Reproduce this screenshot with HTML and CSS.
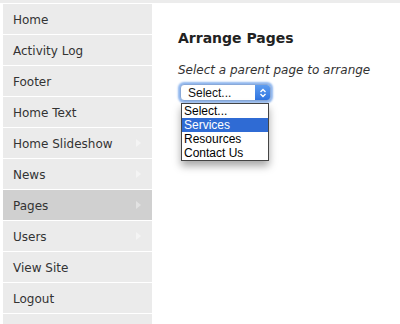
FILE: index.html
```html
<!DOCTYPE html>
<html lang="en">
<head>
    <meta charset="UTF-8">
    <title>Arrange Pages</title>
    <link rel="stylesheet" href="styles.css">
</head>
<body>
    <div class="layout">
        <ul class="side-nav">
            <li><a href="#">Home</a></li>
            <li><a href="#">Activity Log</a></li>
            <li><a href="#">Footer</a></li>
            <li><a href="#">Home Text</a></li>
            <li class="has-sub"><a href="#">Home Slideshow</a></li>
            <li class="has-sub"><a href="#">News</a></li>
            <li class="has-sub active"><a href="#">Pages</a></li>
            <li class="has-sub"><a href="#">Users</a></li>
            <li><a href="#">View Site</a></li>
            <li><a href="#">Logout</a></li>
            <li><a href="#">&nbsp;</a></li>
        </ul>

        <div class="main-content">
            <h2>Arrange Pages</h2>
            <p class="hint">Select a parent page to arrange</p>

            <div class="picker">
                <div class="select-box">
                    <span>Select...</span>
                    <span class="select-btn">
                        <svg width="8" height="10" viewBox="0 0 8 10">
                            <path d="M1.5 4 L4 1.5 L6.5 4 M1.5 6 L4 8.5 L6.5 6" fill="none" stroke="#fff" stroke-width="1.4"/>
                        </svg>
                    </span>
                </div>
                <ul class="select-list">
                    <li>Select...</li>
                    <li class="selected">Services</li>
                    <li>Resources</li>
                    <li>Contact Us</li>
                </ul>
            </div>
        </div>
    </div>
</body>
</html>
```

FILE: styles.css
```css
* {
    margin: 0;
    padding: 0;
    box-sizing: border-box;
}

html {
    height: 100%;
    overflow: hidden;
}

body {
    font-family: "DejaVu Sans", Verdana, sans-serif;
    background: white;
    border-top: 3px solid #ececec;
    color: #333;
}

.layout {
    display: flex;
    gap: 26px;
    padding: 1px 0 0 3px;
}

.side-nav {
    list-style: none;
    width: 149px;
    flex-shrink: 0;
}

.side-nav li {
    position: relative;
    background: #ebebeb;
    margin-bottom: 1px;
}

.side-nav a {
    display: block;
    height: 30px;
    padding: 2px 0 0 10px;
    line-height: 29px;
    font-size: 12px;
    color: #333;
    text-decoration: none;
}

.side-nav li.active {
    background: #d0d0d0;
}

.side-nav li.has-sub::after {
    content: "";
    position: absolute;
    right: 11px;
    top: 11px;
    border-left: 5px solid #f4f4f4;
    border-top: 4px solid transparent;
    border-bottom: 4px solid transparent;
}

.side-nav li.active::after {
    border-left-color: #e2e2e2;
}

.main-content {
    padding-top: 26px;
}

.main-content h2 {
    font-size: 14px;
    line-height: 16px;
    font-weight: bold;
    color: #222;
    margin-bottom: 17px;
}

.hint {
    font-size: 12px;
    line-height: 14px;
    font-style: italic;
    color: #333;
    margin-bottom: 7px;
}

.picker {
    position: relative;
    width: 91px;
    margin-left: 2px;
}

.select-box {
    display: flex;
    align-items: center;
    justify-content: space-between;
    height: 17px;
    border: 1px solid #8aa9d8;
    border-radius: 4px;
    background: white;
    box-shadow: 0 0 2px 2px #8fb6ee;
    font-family: "Liberation Sans", Arial, sans-serif;
    font-size: 12px;
    color: #111;
    padding-left: 7px;
    overflow: hidden;
}

.select-btn {
    display: flex;
    align-items: center;
    justify-content: center;
    width: 15px;
    height: 100%;
    background: linear-gradient(#5e9df0, #2f74e0);
}

.select-list {
    position: absolute;
    left: 1px;
    top: 19px;
    width: 88px;
    list-style: none;
    background: white;
    border: 1px solid #444;
    box-shadow: 0 5px 8px rgba(0,0,0,0.35);
    font-family: "Liberation Sans", Arial, sans-serif;
    font-size: 12px;
    color: #000;
}

.select-list li {
    height: 14px;
    line-height: 14px;
    padding-left: 2px;
}

.select-list li.selected {
    background: #2f6bd4;
    color: white;
}
```
